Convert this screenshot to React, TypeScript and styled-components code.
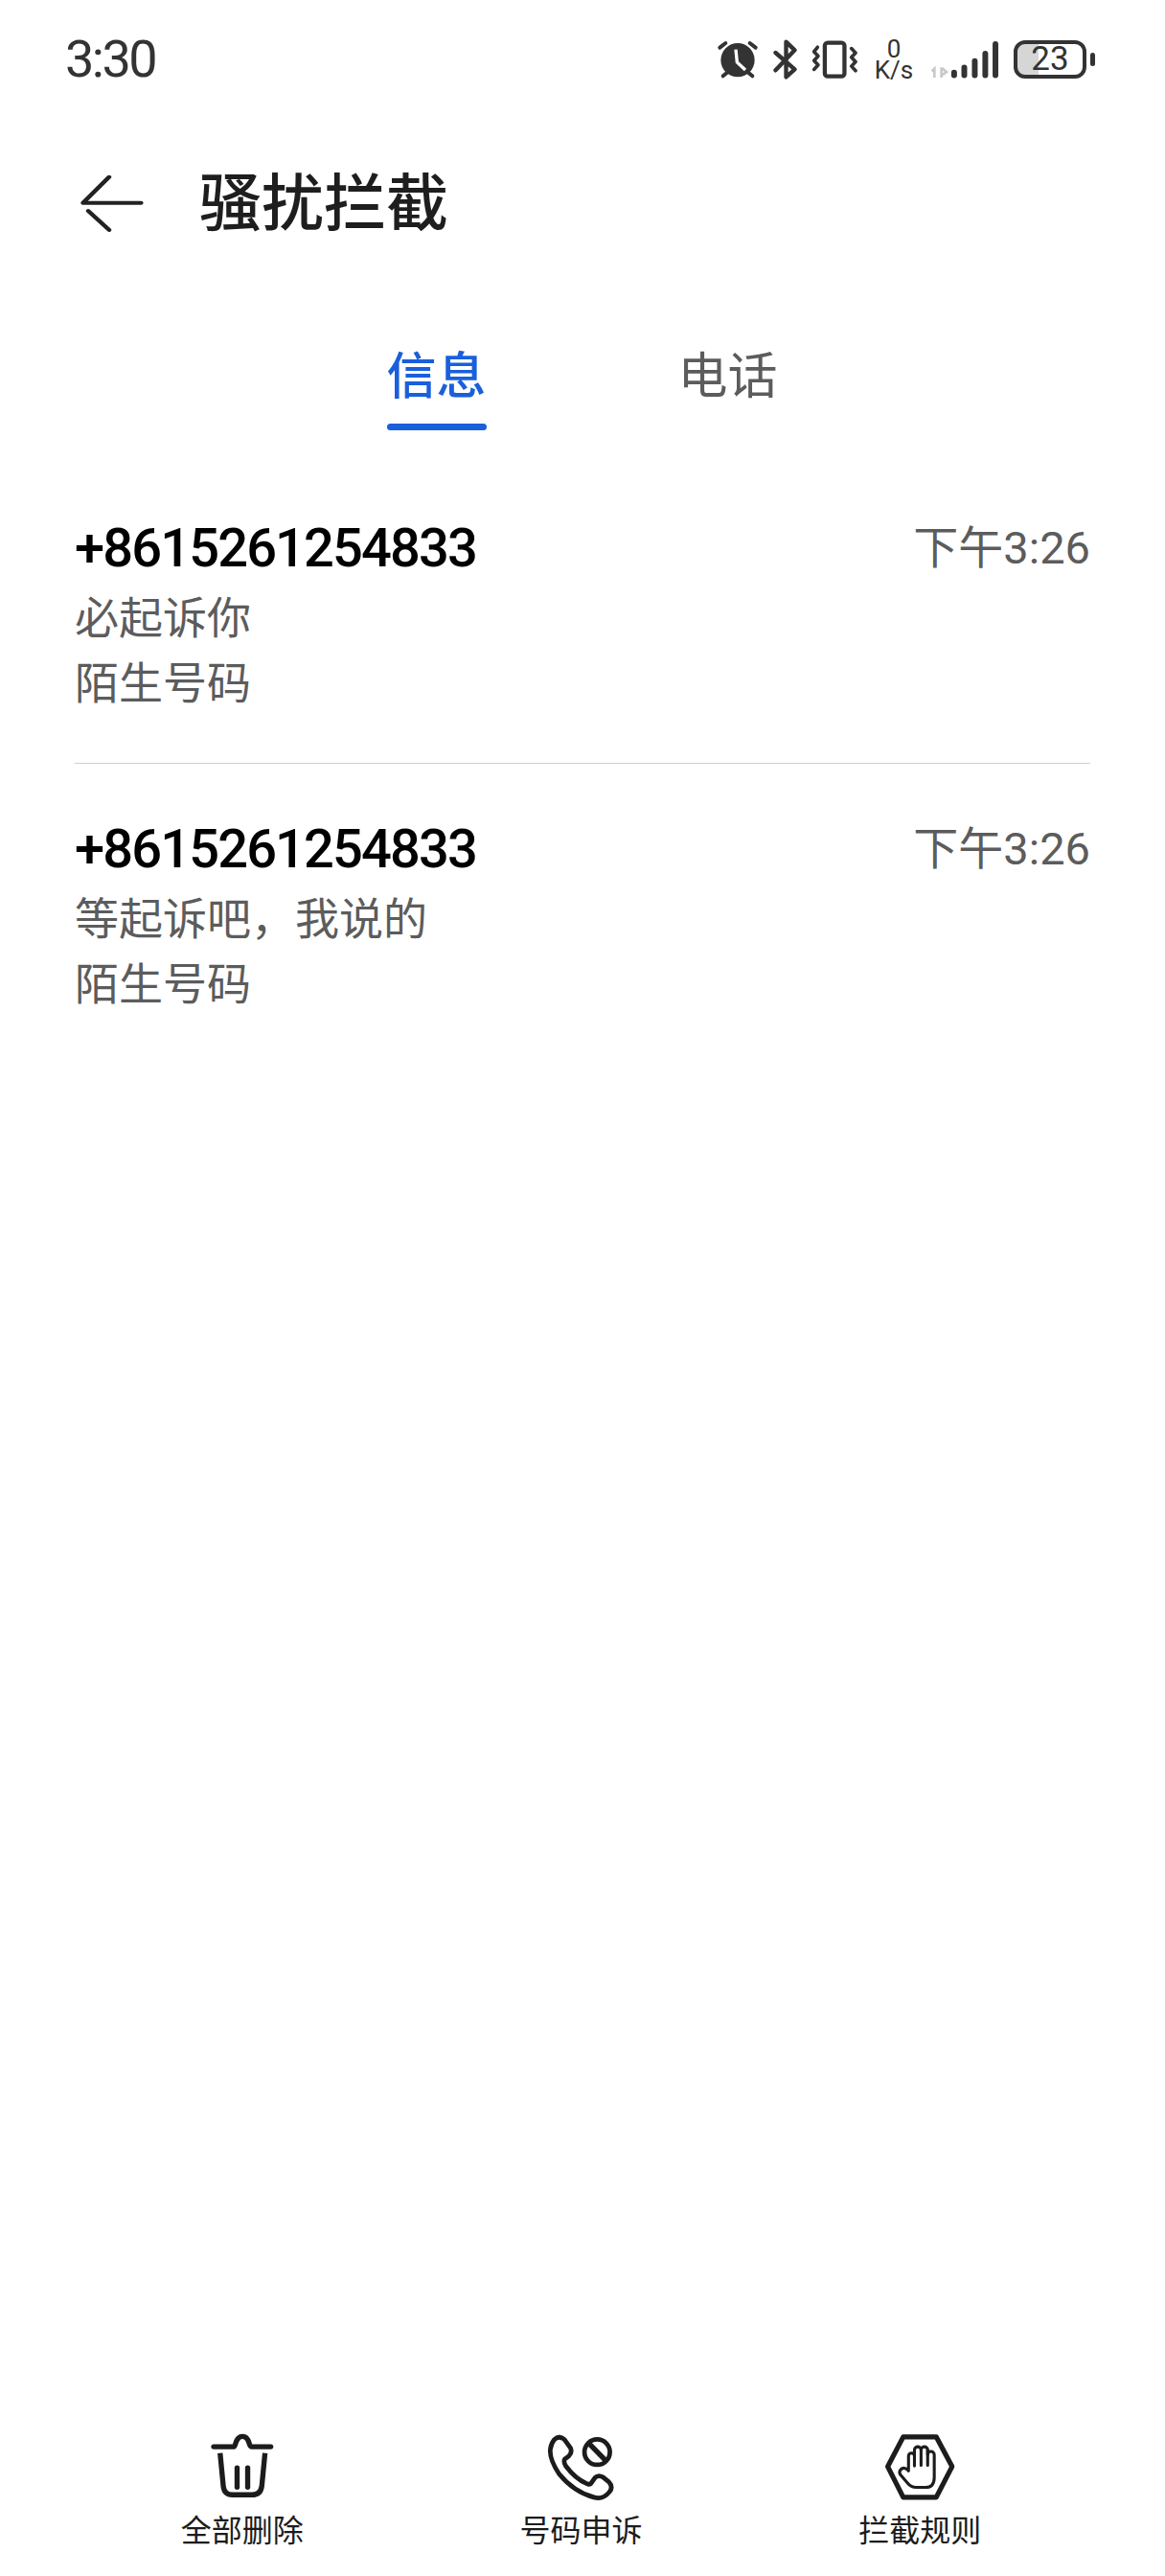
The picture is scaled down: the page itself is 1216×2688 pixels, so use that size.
import styled, { createGlobalStyle } from "styled-components";

const GlobalStyle = createGlobalStyle`
  html, body {
    margin: 0;
    padding: 0;
    background: #fff;
  }
  body {
    font-family: Roboto, "Noto Sans CJK SC", sans-serif;
  }
`;

const messages = [
  { id: 1, phone: "+8615261254833", time: "下午3:26", body: "必起诉你", tag: "陌生号码" },
  { id: 2, phone: "+8615261254833", time: "下午3:26", body: "等起诉吧，我说的", tag: "陌生号码" },
];

const AlarmIcon = () => (
  <svg width="44" height="42" viewBox="92 60 132 126">
    <g stroke="#333" strokeWidth="12" strokeLinecap="round" fill="none">
      <path d="M102 86 L120 72" />
      <path d="M214 86 L196 72" />
      <path d="M112 175 L124 165" />
      <path d="M204 175 L192 165" />
    </g>
    <circle cx="158" cy="125" r="53" fill="#333" />
    <path d="M152 92 L156 132 L182 156" stroke="#fff" strokeWidth="10" fill="none" />
  </svg>
);

const BluetoothIcon = () => (
  <svg width="27" height="42" viewBox="262 58 80 126">
    <path
      d="M272 100 L332 152 L305 176 V66 L332 92 L272 155"
      stroke="#333"
      strokeWidth="13"
      strokeLinecap="round"
      strokeLinejoin="round"
      fill="none"
    />
  </svg>
);

const VibrateIcon = () => (
  <svg width="48" height="42" viewBox="385 60 145 125">
    <rect x="427" y="70" width="62" height="106" rx="9" stroke="#333" strokeWidth="13" fill="none" />
    <path
      d="M404 84 L393 98 L406 112 L393 126 L406 140 L393 154"
      stroke="#333"
      strokeWidth="11"
      strokeLinecap="round"
      strokeLinejoin="round"
      fill="none"
    />
    <path
      d="M511 88 L524 102 L511 116 L524 130 L511 144 L524 158"
      stroke="#333"
      strokeWidth="11"
      strokeLinecap="round"
      strokeLinejoin="round"
      fill="none"
    />
  </svg>
);

const SignalIcon = () => (
  <svg width="73" height="42" viewBox="755 60 220 125">
    <path d="M768 180 V152 L760 160 M790 147 V180 M792 150 L806 162 L792 172" stroke="#c9c9c9" strokeWidth="8" fill="none" />
    <g stroke="#333" strokeWidth="18" strokeLinecap="round">
      <path d="M830 164 V172" />
      <path d="M862 148 V172" />
      <path d="M895 128 V172" />
      <path d="M928 104 V172" />
      <path d="M960 74 V172" />
    </g>
  </svg>
);

const BackIcon = () => (
  <svg width="66" height="60" viewBox="215 545 170 178" preserveAspectRatio="none">
    <path
      d="M292 550 L222 630 H378 M236 655 L292 714"
      stroke="#222"
      strokeWidth="12"
      strokeLinecap="round"
      strokeLinejoin="round"
      fill="none"
    />
  </svg>
);

const TrashIcon = () => (
  <svg width="67" height="71" viewBox="180 80 200 212">
    <g stroke="#1c1c1c" strokeWidth="16" strokeLinecap="round" fill="none">
      <path d="M192 122 H255 C262 122 258 90 282 90 C306 90 300 122 309 122 H370" />
      <path d="M212 142 L222 245 Q225 272 250 272 H312 Q338 272 342 245 L352 142" strokeLinecap="butt" />
      <path d="M265 188 V248" />
      <path d="M298 188 V248" />
    </g>
  </svg>
);

const PhoneBlockIcon = () => (
  <svg width="72" height="72" viewBox="115 85 212 212">
    <g stroke="#1c1c1c" strokeWidth="14" fill="none" strokeLinejoin="round">
      <path d="M140 105 Q155 90 172 105 L190 130 Q196 145 185 155 L172 165 Q168 172 175 185 Q205 225 240 240 Q250 245 256 235 L265 222 Q275 212 290 220 L308 235 Q322 250 310 265 Q290 290 262 282 Q200 265 155 210 Q125 165 128 135 Q130 118 140 105 Z" />
      <circle cx="272" cy="143" r="39" />
      <path d="M248 118 L297 168" strokeWidth="16" />
    </g>
  </svg>
);

const HandStopIcon = () => (
  <svg width="76" height="73" viewBox="1162 78 220 212">
    <path
      d="M1175 182 L1222 92 H1322 L1370 182 L1322 275 H1222 Z"
      stroke="#1c1c1c"
      strokeWidth="15"
      strokeLinejoin="round"
      fill="none"
    />
    <g stroke="#1c1c1c" strokeWidth="9" strokeLinecap="round" strokeLinejoin="round" fill="none">
      <path d="M1238 192 V150 A9 9 0 0 1 1256 150 V132 A10 10 0 0 1 1276 132 A10 10 0 0 1 1296 132 V146 A10 10 0 0 1 1316 146 V215 Q1316 245 1290 245 H1262 Q1245 245 1235 232 L1212 205 Q1208 195 1218 188 Q1228 183 1238 195" />
      <path d="M1256 150 V180 M1276 132 V178 M1296 132 V178" />
    </g>
  </svg>
);

const App = () => {
  return (
    <Page>
      <GlobalStyle />
      <StatusBar>
        <Clock>3:30</Clock>
        <StatusIcons>
          <AlarmIcon />
          <BluetoothIcon />
          <VibrateIcon />
          <NetSpeed>
            0
            <br />
            K/s
          </NetSpeed>
          <SignalIcon />
          <BatteryWrap>
            <Battery $level={33}>23</Battery>
            <BatteryNub />
          </BatteryWrap>
        </StatusIcons>
      </StatusBar>

      <Header>
        <BackIcon />
        <Title>骚扰拦截</Title>
      </Header>

      <Tabs>
        <Tab $active>
          信息
          <Underline />
        </Tab>
        <Tab>
          电话
          <UnderlineSpacer />
        </Tab>
      </Tabs>

      <MessageList>
        {messages.map((m) => (
          <MessageItem key={m.id}>
            <TopRow>
              <Phone>{m.phone}</Phone>
              <Time>{m.time}</Time>
            </TopRow>
            <Body>{m.body}</Body>
            <Tag>{m.tag}</Tag>
          </MessageItem>
        ))}
      </MessageList>

      <BottomBar>
        <Action>
          <ActionIcon>
            <TrashIcon />
          </ActionIcon>
          <ActionLabel>全部删除</ActionLabel>
        </Action>
        <Action>
          <ActionIcon>
            <PhoneBlockIcon />
          </ActionIcon>
          <ActionLabel>号码申诉</ActionLabel>
        </Action>
        <Action>
          <ActionIcon>
            <HandStopIcon />
          </ActionIcon>
          <ActionLabel>拦截规则</ActionLabel>
        </Action>
      </BottomBar>
    </Page>
  );
};

export default App;

const Page = styled.div`
  width: 1216px;
  height: 2688px;
  display: flex;
  flex-direction: column;
  background: #fff;
  overflow: hidden;
`;

const StatusBar = styled.div`
  height: 124px;
  flex-shrink: 0;
  padding: 0 73px 0 68px;
  display: flex;
  align-items: center;
  justify-content: space-between;
`;

const Clock = styled.div`
  font-size: 54px;
  line-height: 60px;
  color: #333;
  letter-spacing: -2.5px;
`;

const StatusIcons = styled.div`
  display: flex;
  align-items: center;
  gap: 14px;
`;

const NetSpeed = styled.div`
  width: 42px;
  margin: 0 3px 0 3px;
  text-align: center;
  font-size: 26px;
  line-height: 22px;
  color: #333;
`;

const BatteryWrap = styled.div`
  display: flex;
  align-items: center;
  gap: 4px;
`;

const Battery = styled.div<{ $level: number }>`
  width: 76px;
  height: 40px;
  box-sizing: border-box;
  border: 4px solid #333;
  border-radius: 12px;
  background: linear-gradient(90deg, #d6d6d6 ${(p) => p.$level}%, #fff ${(p) => p.$level}%);
  display: flex;
  align-items: center;
  justify-content: center;
  font-size: 35px;
  line-height: 32px;
  color: #333;
`;

const BatteryNub = styled.div`
  width: 5px;
  height: 14px;
  border-radius: 3px;
  background: #333;
`;

const Header = styled.div`
  height: 177px;
  flex-shrink: 0;
  padding-left: 84px;
  display: flex;
  align-items: center;
  gap: 58px;
`;

const Title = styled.h1`
  margin: 0;
  font-size: 65px;
  line-height: 80px;
  font-weight: 500;
  color: #1e1e1e;
`;

const Tabs = styled.div`
  padding-top: 63px;
  display: flex;
  justify-content: center;
`;

const Tab = styled.div<{ $active?: boolean }>`
  width: 305px;
  margin-left: -1px;
  display: flex;
  flex-direction: column;
  align-items: center;
  font-size: 52px;
  line-height: 60px;
  font-weight: ${(p) => (p.$active ? 500 : 400)};
  color: ${(p) => (p.$active ? "#1a5fdc" : "#5c5c5c")};
`;

const Underline = styled.div`
  width: 104px;
  height: 7px;
  margin-top: 18px;
  border-radius: 4px;
  background: #1a5fdc;
`;

const UnderlineSpacer = styled.div`
  height: 7px;
  margin-top: 18px;
`;

const MessageList = styled.div`
  margin-top: 34px;
  padding: 0 78px;
`;

const MessageItem = styled.div`
  padding: 54px 0 49px;
  border-bottom: 1px solid #d0d0d0;

  &:last-child {
    border-bottom: none;
  }
`;

const TopRow = styled.div`
  display: flex;
  align-items: center;
  justify-content: space-between;
  margin-bottom: 4px;
`;

const Phone = styled.div`
  font-size: 56px;
  line-height: 70px;
  font-weight: 500;
  letter-spacing: -1.85px;
  color: #000;
`;

const Time = styled.div`
  font-size: 47px;
  line-height: 70px;
  color: #5c5c5c;
`;

const Body = styled.div`
  font-size: 46px;
  line-height: 68px;
  color: #5c5c5c;
`;

const Tag = styled(Body)``;

const BottomBar = styled.div`
  margin-top: auto;
  padding: 0 79px 27px 76px;
  display: grid;
  grid-template-columns: repeat(3, 1fr);
`;

const Action = styled.div`
  display: flex;
  flex-direction: column;
  align-items: center;
`;

const ActionIcon = styled.div`
  height: 73px;
  display: flex;
  align-items: center;
  justify-content: center;
`;

const ActionLabel = styled.div`
  margin-top: 10px;
  font-size: 32px;
  line-height: 40px;
  color: #1c1c1c;
`;
